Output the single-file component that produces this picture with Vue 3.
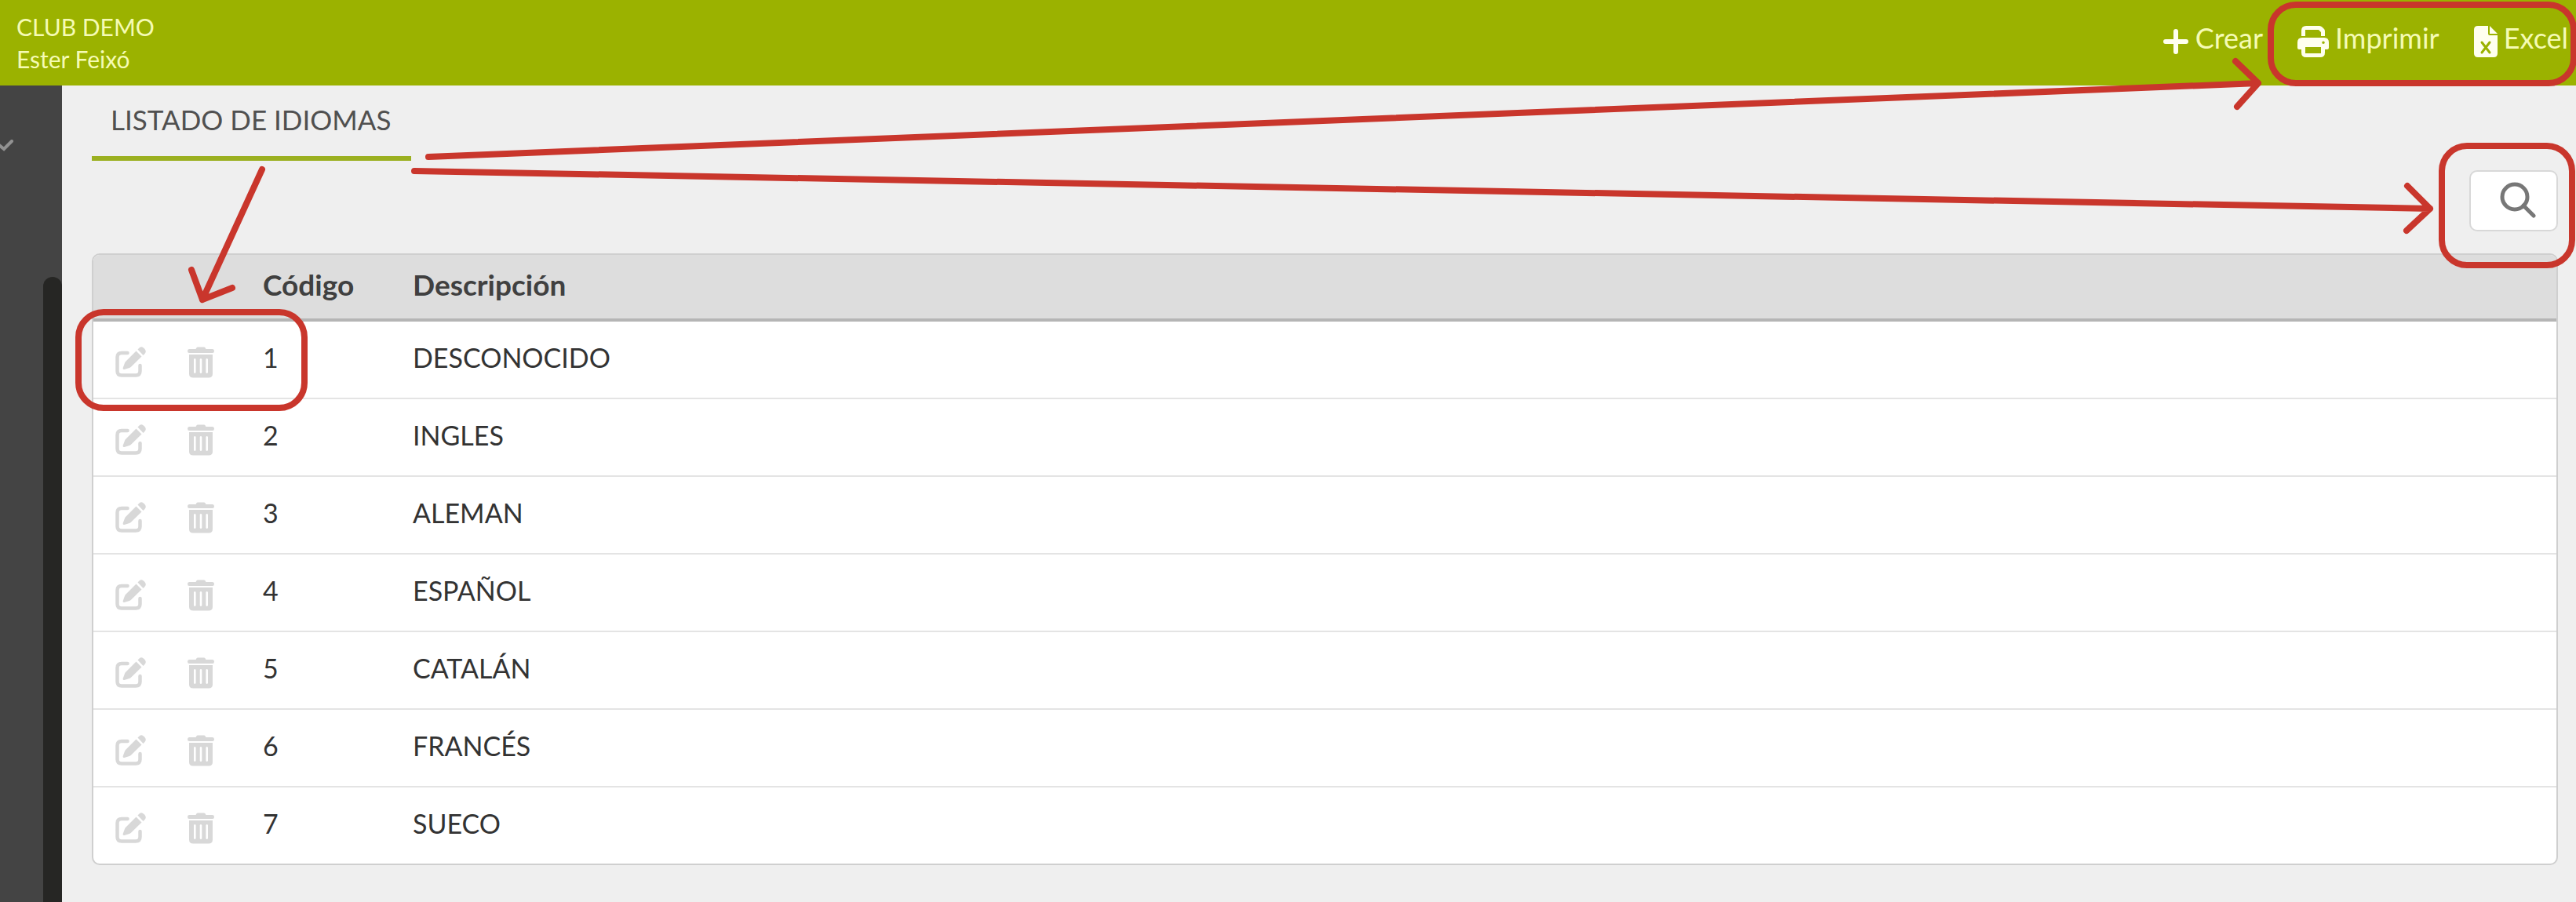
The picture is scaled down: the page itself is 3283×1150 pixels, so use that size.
<template>
    <div class="page">
        <header class="topbar">
            <div class="account">
                <span>CLUB DEMO</span>
                <span>Ester Feixó</span>
            </div>
            <nav class="actions">
                <button type="button" class="action create">
                    <svg width="34" height="34" viewBox="0 0 34 34" aria-hidden="true">
                        <path d="M17 4v26M4 17h26" fill="none" stroke="currentColor" stroke-width="6" stroke-linecap="round" />
                    </svg>
                    <span>Crear</span>
                </button>
                <button type="button" class="action print">
                    <svg width="40" height="40" viewBox="0 0 40 40" aria-hidden="true">
                        <path
                            fill="currentColor"
                            fill-rule="evenodd"
                            d="M11 0H28Q30 0 31.500 1.500L34 4Q35 5 35 7V13H30V8L27 5H10V13H5V6Q5 0 11 0ZM6 15H34Q40 15 40 21V28Q40 30 38 30H35V34Q35 40 29 40H11Q5 40 5 34V30H2Q0 30 0 28V21Q0 15 6 15ZM10 27V35H30V27ZM33 19.500A1.800 1.800 0 1 0 33 23.100A1.800 1.800 0 1 0 33 19.500Z"
                        />
                    </svg>
                    <span>Imprimir</span>
                </button>
                <button type="button" class="action excel">
                    <svg width="30" height="40" viewBox="0 0 30 40" aria-hidden="true">
                        <path fill="currentColor" d="M5 0H18V10Q18 12 20 12H30V35Q30 40 25 40H5Q0 40 0 35V5Q0 0 5 0ZM20 0L30 10H20Z" />
                        <path d="M10 21l10 13M20 21L10 34" fill="none" stroke="#9bb200" stroke-width="3" stroke-linecap="round" />
                    </svg>
                    <span>Excel</span>
                </button>
            </nav>
        </header>

        <div class="body">
            <aside class="sidebar">
                <svg class="chevron" width="18" height="16" viewBox="0 0 18 16" aria-hidden="true">
                    <path d="M-6 3L5 12L15 2" fill="none" stroke="#929292" stroke-width="4" stroke-linecap="round" />
                </svg>
                <div class="thumb"></div>
            </aside>

            <main class="content">
                <h1>LISTADO DE IDIOMAS</h1>
                <div class="tools">
                    <button type="button" class="search" aria-label="Buscar">
                        <svg width="46" height="46" viewBox="0 0 46 46" aria-hidden="true">
                            <g fill="none" stroke="#777777" stroke-width="5">
                                <circle cx="19" cy="19" r="16" />
                                <path d="M30 30L43 43" stroke-linecap="round" />
                            </g>
                        </svg>
                    </button>
                </div>

                <div class="card">
                    <table>
                        <colgroup>
                            <col class="col-edit" />
                            <col class="col-delete" />
                            <col class="col-code" />
                            <col />
                        </colgroup>
                        <thead>
                            <tr>
                                <th></th>
                                <th></th>
                                <th scope="col">Código</th>
                                <th scope="col">Descripción</th>
                            </tr>
                        </thead>
                        <tbody>
                            <tr v-for="idioma in idiomas" :key="idioma.codigo">
                                <td>
                                    <button type="button" class="icon" aria-label="Editar">
                                        <svg width="40" height="40" viewBox="0 0 40 40" aria-hidden="true">
                                            <path
                                                d="M15.500 8H8Q2.500 8 2.500 13.500V31Q2.500 36.500 8 36.500H26Q31.500 36.500 31.500 31V24"
                                                fill="none"
                                                stroke="currentColor"
                                                stroke-width="4.500"
                                                stroke-linecap="round"
                                            />
                                            <path
                                                fill="currentColor"
                                                d="M28.500 3.500L30.500 1.500Q33.500 -1 36.500 2L37.300 2.800Q40.200 6 37.500 9L35.500 11ZM26.500 5.500L33.500 12.500L20.500 25.300Q19.500 26.300 18 26.900L11.500 29Q9.300 29.300 9.700 27L12 20.800Q12.500 19.500 13.500 18.500Z"
                                            />
                                        </svg>
                                    </button>
                                </td>
                                <td>
                                    <button type="button" class="icon" aria-label="Eliminar">
                                        <svg width="34" height="40" viewBox="0 0 34 40" aria-hidden="true">
                                            <path
                                                fill="currentColor"
                                                fill-rule="evenodd"
                                                d="M10.500 3L11.500 1.200Q12 .500 13 .500H21Q22 .500 22.500 1.200L23.500 3H32Q34 3 34 5.500Q34 8 32 8H2Q0 8 0 5.500Q0 3 2 3ZM2 10H32V34.500Q32 39.500 27 39.500H7Q2 39.500 2 34.500ZM8 16V33Q9.300 35 10.600 33V16Q9.300 14 8 16ZM15.700 16V33Q17 35 18.300 33V16Q17 14 15.700 16ZM23.400 16V33Q24.700 35 26 33V16Q24.700 14 23.400 16Z"
                                            />
                                        </svg>
                                    </button>
                                </td>
                                <td>{{ idioma.codigo }}</td>
                                <td>{{ idioma.descripcion }}</td>
                            </tr>
                        </tbody>
                    </table>
                </div>
            </main>
        </div>

        <!-- guide marks over the list -->
        <svg class="marks" viewBox="0 0 3283 1150" aria-hidden="true">
            <g fill="none" stroke="#c9362c" stroke-width="8" stroke-linecap="round" stroke-linejoin="round">
                <rect x="2894" y="6" width="386" height="100" rx="32" />
                <rect x="3112" y="186" width="166" height="152" rx="32" />
                <rect x="100" y="398" width="288" height="122" rx="32" />
                <path d="M546 200L2878 106M2849 78L2878 106L2851 136" />
                <path d="M528 218L3097 266M3068 237L3097 266L3067 294" />
                <path d="M334 216L258 382M244 344L258 382L296 367" />
            </g>
        </svg>
    </div>
</template>

<script setup>
import { ref } from 'vue'

const idiomas = ref([
    { codigo: 1, descripcion: 'DESCONOCIDO' },
    { codigo: 2, descripcion: 'INGLES' },
    { codigo: 3, descripcion: 'ALEMAN' },
    { codigo: 4, descripcion: 'ESPAÑOL' },
    { codigo: 5, descripcion: 'CATALÁN' },
    { codigo: 6, descripcion: 'FRANCÉS' },
    { codigo: 7, descripcion: 'SUECO' }
]);
</script>

<style>
body {
    background-color: #efefef;
}
</style>

<style scoped>
.page {
    position: relative;
    display: flex;
    flex-direction: column;
    min-height: 100vh;
    overflow: hidden;
    background-color: #efefef;
    color: #333333;
    font-family: Lato, "Liberation Sans", sans-serif;
    font-size: 34px;
}

button {
    padding: 0;
    border: none;
    background: none;
    color: inherit;
    font: inherit;
    cursor: pointer;
}

svg {
    display: block;
    flex: none;
}

.topbar {
    display: flex;
    justify-content: space-between;
    box-sizing: border-box;
    height: 109px;
    padding: 14px 10px 0 21px;
    background-color: #9bb200;
    color: #f5fbb4;
}

.account {
    display: flex;
    flex-direction: column;
    font-size: 30px;
    line-height: 41px;
}

.actions {
    display: flex;
    align-items: flex-start;
    gap: 44px;
    padding-top: 14px;
}

.action {
    display: flex;
    align-items: center;
    gap: 8px;
    height: 44px;
    font-size: 36px;
    line-height: 44px;
}

.action svg {
    margin-top: 6px;
    color: #ffffee;
}

.action span {
    margin-bottom: 4px;
}

.body {
    display: flex;
    flex: 1;
}

.sidebar {
    display: flex;
    flex-direction: column;
    flex: none;
    width: 79px;
    padding-top: 69px;
    box-sizing: border-box;
    background-color: #444444;
}

.thumb {
    flex: 1;
    align-self: flex-end;
    width: 24px;
    margin-top: 159px;
    border-radius: 12px 12px 0 0;
    background-color: #262624;
}

.content {
    flex: 1;
    padding: 20px 23px 0 38px;
}

h1 {
    width: fit-content;
    margin: 0;
    padding: 0 26px 24px 24px;
    border-bottom: 6px solid #9bb020;
    color: #505050;
    font-size: 35px;
    font-weight: 400;
    line-height: 46px;
}

.tools {
    display: flex;
    justify-content: flex-end;
    padding: 12px 0 28px;
}

.search {
    display: flex;
    align-items: center;
    justify-content: flex-end;
    width: 113px;
    height: 78px;
    padding: 0 26px 2px 0;
    border: 2px solid #d8d8d8;
    border-radius: 10px;
    background-color: #ffffff;
}

.card {
    overflow: hidden;
    border: 2px solid #cfcfcf;
    border-radius: 10px;
    background-color: #ffffff;
}

table {
    width: 100%;
    border-collapse: separate;
    border-spacing: 0;
    table-layout: fixed;
}

.col-edit {
    width: 92px;
}

.col-delete {
    width: 96px;
}

.col-code {
    width: 191px;
}

th,
td {
    box-sizing: border-box;
    padding: 0 0 6px 28px;
    text-align: left;
    vertical-align: middle;
}

th {
    height: 85px;
    border-bottom: 4px solid #b5b5b5;
    background-color: #dddddd;
    color: #404040;
    font-size: 37px;
    font-weight: 700;
}

td {
    height: 99px;
    border-bottom: 2px solid #e4e4e4;
}

tbody tr:last-child td {
    height: 97px;
    border-bottom: none;
}

.icon {
    display: block;
    padding-top: 12px;
    color: #d8d8d8;
}

.marks {
    position: absolute;
    top: 0;
    left: 0;
    width: 100%;
    pointer-events: none;
}
</style>
